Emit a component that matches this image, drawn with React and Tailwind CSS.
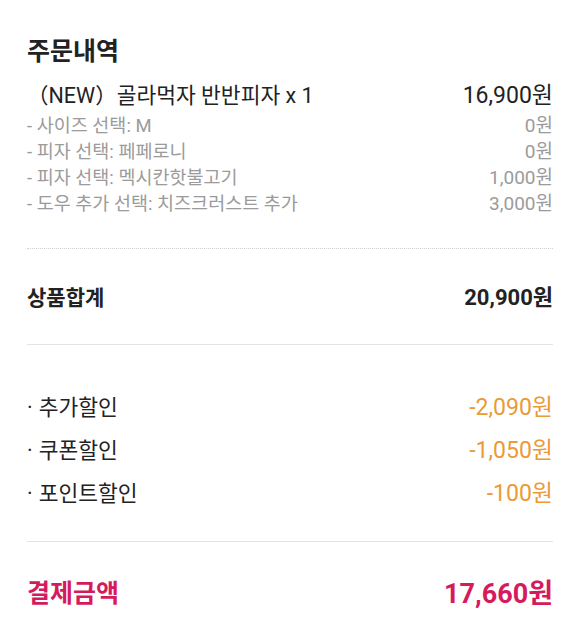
import React from "react";

const font = {
  fontFamily: '"Roboto", "Noto Sans CJK KR", sans-serif',
};

const options = [
  { label: "- 사이즈 선택: M", price: "0원" },
  { label: "- 피자 선택: 페페로니", price: "0원" },
  { label: "- 피자 선택: 멕시칸핫불고기", price: "1,000원" },
  { label: "- 도우 추가 선택: 치즈크러스트 추가", price: "3,000원" },
];

const discounts = [
  { label: "추가할인", price: "-2,090원" },
  { label: "쿠폰할인", price: "-1,050원" },
  { label: "포인트할인", price: "-100원" },
];

export default function App() {
  return (
    <div
      className="w-[580px] h-[633px] bg-white px-[27px] pt-[36px] text-[#222]"
      style={font}>
      <div className="text-[25px] leading-[32px] font-semibold text-[#222]">
        주문내역
      </div>

      <div className="mt-[14px] flex items-center justify-between leading-[28px] text-[#222]">
        <span className="text-[21.5px]">（NEW）골라먹자 반반피자 x 1</span>
        <span className="text-[23px]">16,900원</span>
      </div>

      <div className="mt-[3px]">
        {options.map((o) => (
          <div
            key={o.label}
            className="flex items-center justify-between text-[18.5px] leading-[26px] text-[#9b9b9b]">
            <span>{o.label}</span>
            <span className="text-[19px]">{o.price}</span>
          </div>
        ))}
      </div>

      <div className="mt-[31px] border-t border-dotted border-[#cfcfcf]" />

      <div className="mt-[35px] flex items-center justify-between leading-[28px] font-semibold text-[#222]">
        <span className="text-[21px]">상품합계</span>
        <span className="text-[22px] font-bold">20,900원</span>
      </div>

      <div className="mt-[32px] border-t border-[#e3e3e3]" />

      <div className="mt-[49px] flex flex-col gap-[15px]">
        {discounts.map((d) => (
          <div
            key={d.label}
            className="flex items-center justify-between leading-[28px]">
            <span className="text-[21.5px] text-[#222]">
              <span className="mr-[6px]">·</span>
              {d.label}
            </span>
            <span className="text-[23px] text-[#eb9a36]">{d.price}</span>
          </div>
        ))}
      </div>

      <div className="mt-[33px] border-t border-[#e3e3e3]" />

      <div className="mt-[37px] flex items-center justify-between leading-[30px] font-bold text-[#d61a5e]">
        <span className="text-[25px]">결제금액</span>
        <span className="text-[27px]">17,660원</span>
      </div>
    </div>
  );
}
